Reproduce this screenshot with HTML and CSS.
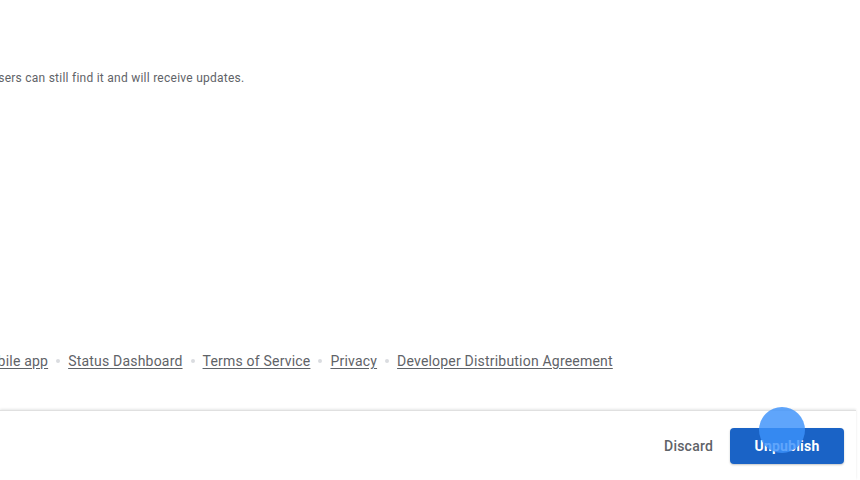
FILE: index.html
```html
<!DOCTYPE html>
<html lang="en">
<head>
<meta charset="utf-8">
<title>Unpublish</title>
<link rel="stylesheet" href="styles.css">
</head>
<body>
<div class="page">
  <main class="content">
    <p class="notice">Existing users can still find it and will receive updates.</p>
  </main>
  <nav class="footer-links">
    <a href="#">Mobile app</a>
    <span class="dot"></span>
    <a href="#">Status Dashboard</a>
    <span class="dot"></span>
    <a href="#">Terms of Service</a>
    <span class="dot"></span>
    <a href="#">Privacy</a>
    <span class="dot"></span>
    <a href="#">Developer Distribution Agreement</a>
  </nav>
  <div class="action-bar">
    <button class="btn btn-text">Discard</button>
    <button class="btn btn-primary">Unpublish</button>
  </div>
</div>
<div class="click-indicator"></div>
</body>
</html>
```

FILE: styles.css
```css
html, body {
  margin: 0;
  padding: 0;
  background: #ffffff;
}
body {
  font-family: Roboto, "Liberation Sans", Arial, sans-serif;
  width: 860px;
  height: 480px;
  overflow: hidden;
  position: relative;
}
.page {
  display: flex;
  flex-direction: column;
  height: 480px;
}
.content {
  height: 340px;
}
.notice {
  margin: 70px 0 0 -56px;
  font-size: 12px;
  line-height: 16px;
  color: #5f6368;
  letter-spacing: 0.25px;
  white-space: nowrap;
}
.footer-links {
  display: flex;
  align-items: center;
  gap: 8px;
  margin-left: -23px;
  height: 42px;
  font-size: 14px;
  line-height: 20px;
  letter-spacing: 0.2px;
}
.footer-links a {
  color: #5f6368;
  text-decoration: underline;
  text-underline-offset: 2px;
  white-space: nowrap;
}
.dot {
  width: 4px;
  height: 4px;
  border-radius: 50%;
  background: #dadce0;
}
.action-bar {
  margin-top: 28px;
  width: 856px;
  border-top: 1px solid #e0e0e0;
  box-shadow: 0 -1px 2px rgba(60, 64, 67, 0.12);
  display: flex;
  justify-content: flex-end;
  align-items: flex-start;
  padding: 17px 12px 0 0;
  box-sizing: border-box;
  height: 70px;
}
.btn {
  font-family: Roboto, "Liberation Sans", Arial, sans-serif;
  font-size: 14px;
  font-weight: 500;
  height: 36px;
  border: none;
  border-radius: 4px;
  cursor: pointer;
  letter-spacing: 0.2px;
}
.btn-text {
  background: transparent;
  color: #5f6368;
  padding: 0 8px;
  margin-right: 9px;
}
.btn-primary {
  background: #1a63c6;
  color: #ffffff;
  padding: 0 24px;
  width: 114px;
  font-weight: 700;
  box-shadow: 0 1px 2px rgba(60, 64, 67, 0.3);
}
.click-indicator {
  position: absolute;
  left: 759px;
  top: 407px;
  width: 46px;
  height: 46px;
  border-radius: 50%;
  background: rgba(60, 145, 250, 0.82);
  pointer-events: none;
}
```
